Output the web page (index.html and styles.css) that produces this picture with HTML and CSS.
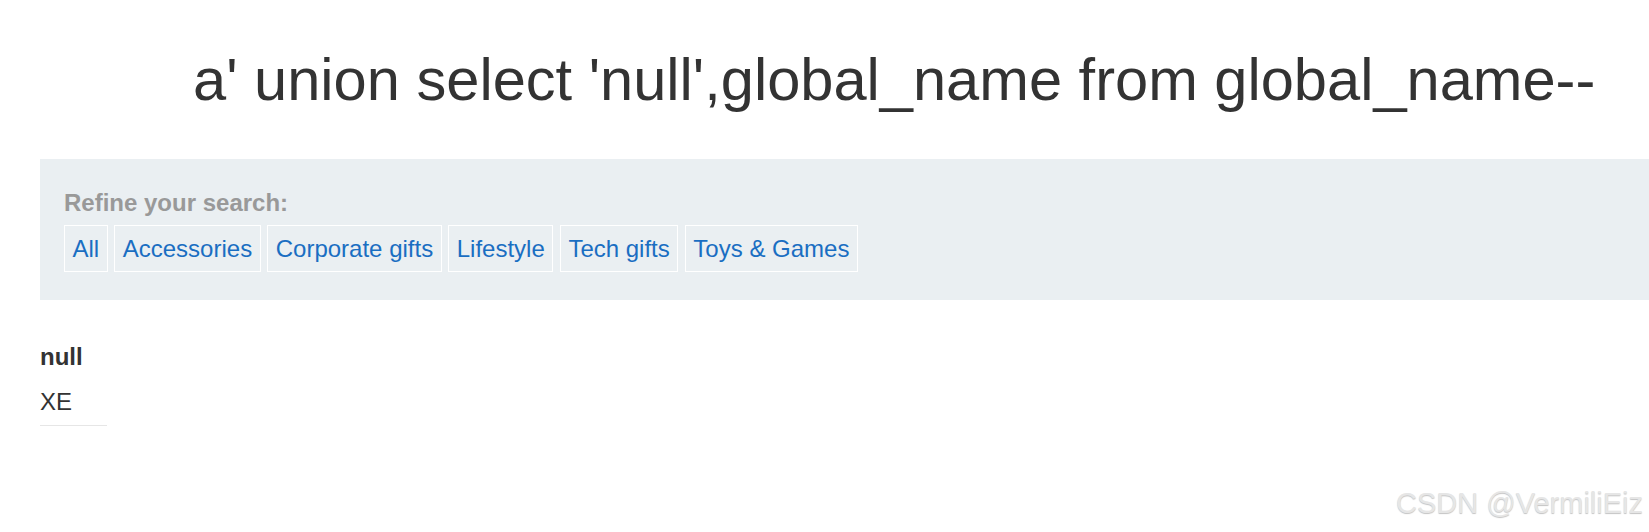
FILE: index.html
```html
<html><head>
<meta charset="UTF-8">
<meta name="viewport" content="width=device-width, initial-scale=1.0">
<title>Filter</title>
<link rel="stylesheet" href="styles.css">
</head>
<body>
  <section class="page">
    <h1 class="search-title">a' union select 'null',global_name from global_name--</h1>

    <section class="filters">
      <div class="filters-label">Refine your search:</div>
      <div class="filters-list">
        <a href="#" class="filter-link">All</a>
        <a href="#" class="filter-link">Accessories</a>
        <a href="#" class="filter-link">Corporate gifts</a>
        <a href="#" class="filter-link">Lifestyle</a>
        <a href="#" class="filter-link">Tech gifts</a>
        <a href="#" class="filter-link">Toys &amp; Games</a>
      </div>
    </section>

    <table class="results">
      <tbody>
        <tr><th>null</th></tr>
        <tr><td>XE</td></tr>
      </tbody>
    </table>
  </section>

  <div class="watermark">CSDN @VermiliEiz</div>
</body></html>
```

FILE: styles.css
```css
body {
  margin: 0;
  font-family: "Liberation Sans", Arial, sans-serif;
  color: #333;
  background-color: #fff;
  overflow: hidden;
}
.page {
  padding-left: 40px;
}
.search-title {
  margin: 44px 0 43px;
  padding-left: 153px;
  font-size: 59.6px;
  font-weight: normal;
  line-height: 72px;
  color: #333;
  white-space: nowrap;
}
.filters {
  background-color: #eaeff2;
  padding: 30px 24px 28px;
}
.filters-label {
  font-size: 24px;
  line-height: 27px;
  font-weight: bold;
  color: #999;
  margin-bottom: 9px;
}
.filters-list {
  display: flex;
  gap: 6.6px;
}
.filter-link {
  display: block;
  font-size: 24px;
  line-height: 29px;
  padding: 8px 7.5px;
  border: 1px solid #fff;
  color: #1a6ec2;
  text-decoration: none;
}
.results {
  margin-top: 34px;
  border-collapse: collapse;
  font-size: 24px;
}
.results th,
.results td {
  text-align: left;
  padding: 0 24px 0 0;
  line-height: 46px;
}
.results th {
  font-weight: bold;
  color: #333;
}
.results td {
  border-bottom: 1px solid #e6e6e6;
  line-height: 30px;
  padding-top: 7px;
  padding-bottom: 8px;
}
.watermark {
  position: absolute;
  right: 6px;
  bottom: 12px;
  font-size: 29px;
  color: #e6e6e6;
  text-shadow: 0 1px 1px #c4c4c4;
}
```
